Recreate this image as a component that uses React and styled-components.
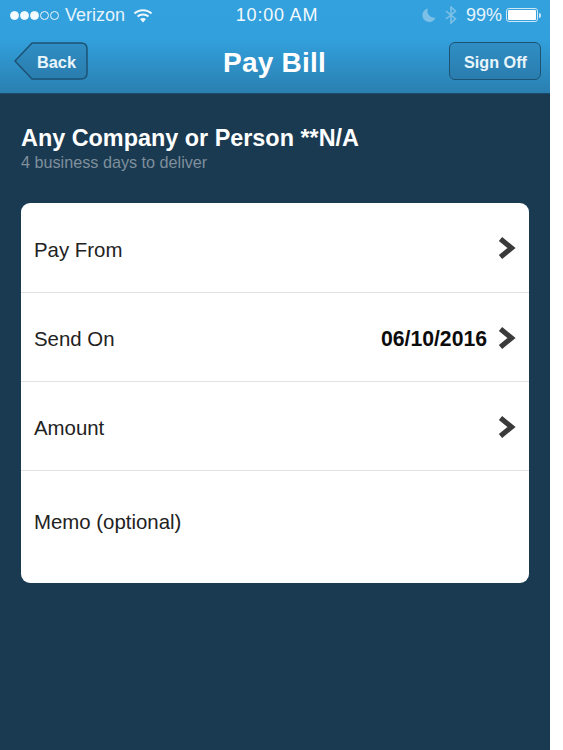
import React from "react";
import styled, { createGlobalStyle } from "styled-components";

const GlobalStyle = createGlobalStyle`
  html, body {
    margin: 0;
    padding: 0;
    background: #ffffff;
  }
  * {
    box-sizing: border-box;
  }
`;

const Screen = styled.div`
  width: 550px;
  height: 750px;
  background-color: #1a3a52;
  font-family: "Liberation Sans", Arial, sans-serif;
  overflow: hidden;
`;

const Header = styled.header`
  height: 94px;
  background: linear-gradient(#32a1dd 0%, #32a0dc 42%, #2a7fb0 100%);
  border-bottom: 1px solid #1d4a68;
`;

const StatusBar = styled.div`
  height: 32px;
  padding: 0 9px 2px 10px;
  display: grid;
  grid-template-columns: 1fr auto 1fr;
  align-items: center;
  color: #e6f4fc;
  font-size: 18px;
`;

const StatusLeft = styled.div`
  display: flex;
  align-items: center;
`;

const StatusRight = styled.div`
  display: flex;
  align-items: center;
  justify-content: flex-end;
`;

const Carrier = styled.span`
  margin-left: 5px;
`;

const Clock = styled.span`
  margin-left: 3px;
  color: #f2f9fd;
  letter-spacing: 0.8px;
`;

const Percent = styled.span`
  margin-left: 9px;
`;

const NavBar = styled.nav`
  height: 38px;
  margin-top: 10px;
  padding: 0 9px 0 14px;
  display: grid;
  grid-template-columns: 1fr auto 1fr;
  align-items: center;
`;

const Title = styled.h1`
  margin: 0 6px 0 0;
  padding-top: 3px;
  color: #ffffff;
  font-size: 28px;
  font-weight: 700;
  letter-spacing: 0.2px;
`;

const BackButton = styled.button`
  position: relative;
  width: 74px;
  height: 38px;
  padding: 2px 0 0 11px;
  border: 0;
  background: none;
  color: #e9f5fb;
  font: 700 16.4px "Liberation Sans", Arial, sans-serif;
`;

const BackShape = styled.svg`
  position: absolute;
  left: 0;
  top: 0;
`;

const BackLabel = styled.span`
  position: relative;
`;

const SignOffButton = styled.button`
  justify-self: end;
  width: 92px;
  height: 38px;
  padding: 2px 0 0 1px;
  border: 1.5px solid #1d5273;
  border-radius: 6px;
  background: linear-gradient(#2f8ec4, #2a7dae);
  color: #e9f5fb;
  font: 700 16.2px "Liberation Sans", Arial, sans-serif;
`;

const Payee = styled.section`
  padding: 31px 21px 0;
`;

const PayeeName = styled.h2`
  margin: 0;
  color: #ffffff;
  font-size: 23.4px;
  line-height: 27px;
  font-weight: 700;
`;

const PayeeNote = styled.p`
  margin: 1px 0 0;
  color: #7f8f9b;
  font-size: 16.2px;
  line-height: 19px;
`;

const Card = styled.div`
  margin: 31px 21px 0;
  background: #ffffff;
  border-radius: 9px;
  overflow: hidden;
`;

const Row = styled.div`
  height: ${(p) => p.$height}px;
  padding: ${(p) => (p.$last ? "0 13px 10px" : "5px 13px 0")};
  display: flex;
  align-items: center;
  justify-content: space-between;
  border-bottom: ${(p) => (p.$last ? "none" : "1px solid #e2e2e2")};
`;

const RowLabel = styled.span`
  color: #222222;
  font-size: 20.4px;
`;

const RowRight = styled.div`
  margin-bottom: 4px;
  display: flex;
  align-items: center;
  gap: 11px;
`;

const RowValue = styled.span`
  margin-top: 2px;
  color: #0c0c0c;
  font-size: 21.2px;
  font-weight: 700;
`;

const Dot = styled.span`
  width: 9px;
  height: 9px;
  margin-right: 1px;
  border-radius: 50%;
  border: 1px solid #f0f8fd;
  background: ${(p) => (p.$on ? "#f4fafe" : "transparent")};
`;

const BatteryBody = styled.span`
  width: 32px;
  height: 14px;
  margin-left: 4px;
  padding: 1px;
  display: block;
  border: 1px solid #cfe8f6;
  border-radius: 3px;
`;

const BatteryFill = styled.span`
  display: block;
  height: 100%;
  background: #ffffff;
  border-radius: 1px;
`;

const BatteryTip = styled.span`
  width: 2px;
  height: 5px;
  margin-left: 1px;
  background: #cfe8f6;
  border-radius: 0 2px 2px 0;
`;

const Wifi = () => (
  <svg width="20" height="15" viewBox="0 0 20 15" style={{ marginLeft: 8 }}>
    <g fill="none" stroke="#f0f8fd" strokeWidth="2">
      <path d="M1.5 5.5 C6 1 14 1 18.5 5.5" />
      <path d="M4.5 8.5 C7.5 5.8 12.5 5.8 15.5 8.5" />
    </g>
    <path d="M7 11 C8.8 9.7 11.2 9.7 13 11 L10 14.5 Z" fill="#f0f8fd" />
  </svg>
);

const Moon = () => (
  <svg width="14" height="14" viewBox="0 0 14 14">
    <path d="M6 0.5 A6.8 6.8 0 1 0 13.6 9.5 A6.6 6.6 0 0 1 6 0.5 Z" fill="#7cc0e8" />
  </svg>
);

const Bluetooth = () => (
  <svg width="12" height="18" viewBox="0 0 12 18" style={{ marginLeft: 9 }}>
    <path d="M1 5 L10.5 12.8 L6 17 V1 L10.5 5.2 L1 13" fill="none" stroke="#7cc0e8" strokeWidth="1.6" />
  </svg>
);

const Chevron = () => (
  <svg width="18" height="24" viewBox="0 0 18 24">
    <path d="M2.5 3 L13.5 12 L2.5 21" fill="none" stroke="#3a3a3a" strokeWidth="5.2" strokeLinejoin="miter" />
  </svg>
);

const rows = [
  { label: "Pay From", height: 90, chevron: true },
  { label: "Send On", height: 89, value: "06/10/2016", chevron: true },
  { label: "Amount", height: 89, chevron: true },
  { label: "Memo (optional)", height: 112, last: true },
];

const App = () => {
  return (
    <Screen>
      <GlobalStyle />
      <Header>
        <StatusBar>
          <StatusLeft>
            <Dot $on />
            <Dot $on />
            <Dot $on />
            <Dot />
            <Dot />
            <Carrier>Verizon</Carrier>
            <Wifi />
          </StatusLeft>
          <Clock>10:00 AM</Clock>
          <StatusRight>
            <Moon />
            <Bluetooth />
            <Percent>99%</Percent>
            <BatteryBody>
              <BatteryFill />
            </BatteryBody>
            <BatteryTip />
          </StatusRight>
        </StatusBar>
        <NavBar>
          <BackButton>
            <BackShape width="74" height="38" viewBox="0 0 74 38">
              <defs>
                <linearGradient id="backFill" x1="0" y1="0" x2="0" y2="1">
                  <stop offset="0" stopColor="#2f8ec4" />
                  <stop offset="1" stopColor="#2a7dae" />
                </linearGradient>
              </defs>
              <path
                d="M1 19 L18 1 H67 Q73 1 73 7 V31 Q73 37 67 37 H18 Z"
                fill="url(#backFill)"
                stroke="#1d5273"
                strokeWidth="1.5"
                strokeLinejoin="round"
              />
            </BackShape>
            <BackLabel>Back</BackLabel>
          </BackButton>
          <Title>Pay Bill</Title>
          <SignOffButton>Sign Off</SignOffButton>
        </NavBar>
      </Header>
      <Payee>
        <PayeeName>Any Company or Person **N/A</PayeeName>
        <PayeeNote>4 business days to deliver</PayeeNote>
      </Payee>
      <Card>
        {rows.map((row) => (
          <Row key={row.label} $height={row.height} $last={row.last}>
            <RowLabel>{row.label}</RowLabel>
            <RowRight>
              {row.value && <RowValue>{row.value}</RowValue>}
              {row.chevron && <Chevron />}
            </RowRight>
          </Row>
        ))}
      </Card>
    </Screen>
  );
};

export default App;
